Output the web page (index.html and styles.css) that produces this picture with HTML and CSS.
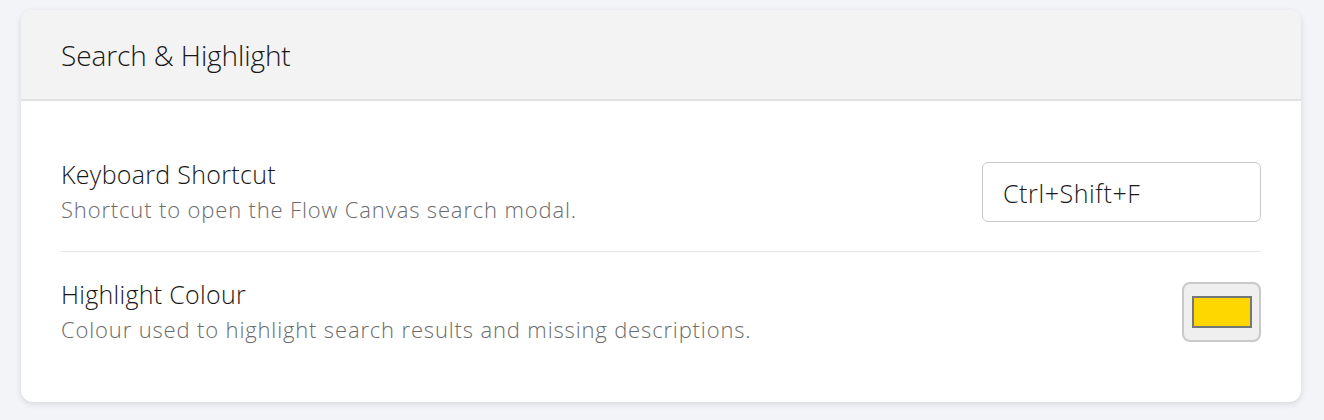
FILE: index.html
```html
<!DOCTYPE html>
<html>
<head>
<meta charset="utf-8">
<link rel="stylesheet" href="styles.css">
</head>
<body>
<section class="card">
  <header class="card-header">
    <h2 class="card-title">Search &amp; Highlight</h2>
  </header>
  <div class="card-body">
    <div class="setting-row">
      <div class="setting-text">
        <div class="setting-label">Keyboard Shortcut</div>
        <div class="setting-desc">Shortcut to open the Flow Canvas search modal.</div>
      </div>
      <input class="shortcut-input" type="text" value="Ctrl+Shift+F">
    </div>
    <div class="setting-row">
      <div class="setting-text">
        <div class="setting-label">Highlight Colour</div>
        <div class="setting-desc">Colour used to highlight search results and missing descriptions.</div>
      </div>
      <button class="colour-button" type="button"><span class="colour-swatch"></span></button>
    </div>
  </div>
</section>
</body>
</html>
```

FILE: styles.css
```css
html, body {
  margin: 0;
  padding: 0;
}
body {
  background: #f3f4f8;
  font-family: "Open Sans", "Liberation Sans", sans-serif;
  padding: 10px 23px 18px 21px;
}
.card {
  background: #ffffff;
  border-radius: 12px;
  overflow: hidden;
  box-shadow: 0 2px 6px rgba(0, 0, 0, 0.12);
}
.card-header {
  background: #f3f3f3;
  border-bottom: 2px solid #e2e2e2;
  height: 89px;
  display: flex;
  align-items: center;
  padding: 0 40px;
}
.card-title {
  margin: 0;
  font-size: 28px;
  font-weight: 300;
  color: #181818;
  letter-spacing: -0.1px;
}
.card-body {
  padding: 31px 40px 30px;
}
.setting-row {
  display: flex;
  align-items: center;
  justify-content: space-between;
  padding: 28px 0;
}
.setting-row:first-child {
  padding-bottom: 27px;
}
.setting-row + .setting-row {
  border-top: 1px solid #e5e5e5;
}
.setting-text {
  display: flex;
  flex-direction: column;
  gap: 6px;
}
.setting-label {
  font-size: 25px;
  font-weight: 300;
  color: #181818;
  line-height: 28px;
  letter-spacing: 0.3px;
}
.setting-desc {
  font-size: 22px;
  font-weight: 300;
  color: #6b6b6b;
  line-height: 30px;
  letter-spacing: 0.85px;
}
.shortcut-input {
  width: 279px;
  height: 60px;
  box-sizing: border-box;
  border: 1px solid #c9c9c9;
  border-radius: 6px;
  padding: 1px 20px 0;
  font-family: "Open Sans", "Liberation Sans", sans-serif;
  font-size: 25px;
  font-weight: 300;
  letter-spacing: 0.6px;
  color: #181818;
  background: #fff;
  outline: none;
}
.colour-button {
  width: 79px;
  height: 60px;
  box-sizing: border-box;
  border: 2px solid #c9c9c9;
  border-radius: 8px;
  background: #efefef;
  display: flex;
  align-items: center;
  justify-content: center;
  padding: 0;
}
.colour-swatch {
  display: block;
  width: 60px;
  height: 32px;
  box-sizing: border-box;
  background: #ffd700;
  border: 2px solid #767676;
}
```
